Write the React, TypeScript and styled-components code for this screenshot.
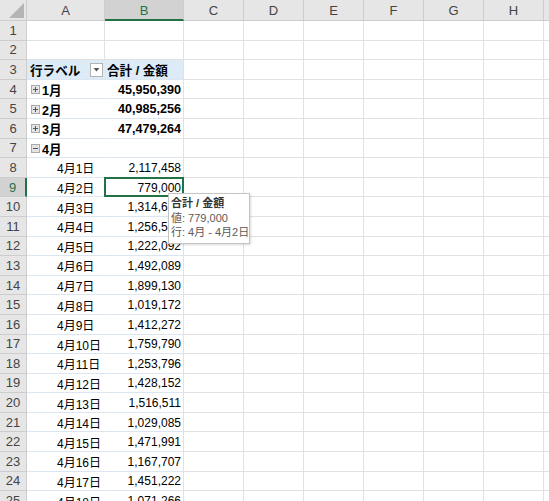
import React from "react";
import styled, {createGlobalStyle, css} from "styled-components";

const GlobalStyle = createGlobalStyle`
  html, body {
    margin: 0;
    padding: 0;
    background: #ffffff;
    overflow: hidden;
  }
  body {
    font-family: "Liberation Sans", "Noto Sans CJK JP", sans-serif;
  }
`

const GREEN = '#217346';
const GRID = '#e1e1e1';
const PIVOT_LINE = '#dbe6f2';
const HEAD_BG = '#e6e6e6';
const HEAD_SEL = '#d2d2d2';
const HEAD_LINE = '#cdcdcd';

const Sheet = styled.div`
  position: relative;
  display: grid;
  grid-template-columns: 27px 78px 79px repeat(7, 60px);
  grid-template-rows: 21px;
  grid-auto-rows: 19.6px;
  width: 549px;
  height: 501px;
  overflow: hidden;
  color: #000;
`

const Corner = styled.div`
  background: ${HEAD_BG};
  border-right: 1px solid ${HEAD_LINE};
  border-bottom: 1px solid ${HEAD_LINE};
  display: flex;
  align-items: flex-end;
  justify-content: flex-end;
  padding: 0 2px 2px 0;
  box-sizing: border-box;
`

const ColHeader = styled.div<{ $selected?: boolean }>`
  background: ${p => p.$selected ? HEAD_SEL : HEAD_BG};
  border-right: 1px solid ${HEAD_LINE};
  border-bottom: ${p => p.$selected ? `2px solid ${GREEN}` : `1px solid ${HEAD_LINE}`};
  box-sizing: border-box;
  display: flex;
  align-items: center;
  justify-content: center;
  font-size: 13px;
  color: ${p => p.$selected ? GREEN : '#444'};
  padding-top: ${p => p.$selected ? '1px' : '0'};
`

const RowHeader = styled.div<{ $selected?: boolean }>`
  background: ${p => p.$selected ? HEAD_SEL : HEAD_BG};
  border-right: ${p => p.$selected ? `2px solid ${GREEN}` : `1px solid ${HEAD_LINE}`};
  border-bottom: 1px solid ${HEAD_LINE};
  box-sizing: border-box;
  display: flex;
  align-items: center;
  justify-content: center;
  font-size: 13px;
  color: ${p => p.$selected ? GREEN : '#444'};
`

const Cell = styled.div<{ $pivot?: boolean; $head?: boolean; $inner?: boolean; $right?: boolean; $bold?: boolean; $indent?: number; $selected?: boolean }>`
  position: relative;
  box-sizing: border-box;
  border-right: 1px solid ${p => p.$inner ? 'transparent' : GRID};
  border-bottom: 1px solid ${p => p.$pivot ? PIVOT_LINE : GRID};
  background: ${p => p.$head ? '#ddebf7' : '#ffffff'};
  display: flex;
  align-items: center;
  justify-content: ${p => p.$right ? 'flex-end' : 'flex-start'};
  padding: 1px 2px 0 ${p => p.$indent ?? 3}px;
  font-size: ${p => p.$bold ? '12.6px' : '12px'};
  font-weight: ${p => p.$bold ? 700 : 400};
  white-space: nowrap;
  overflow: visible;
  ${p => p.$selected && css`
    &::after {
      content: "";
      position: absolute;
      left: -1px;
      top: -1px;
      right: -1px;
      bottom: -1px;
      border: 2px solid ${GREEN};
      pointer-events: none;
    }
  `}
`

const Label = styled.span`
  flex: 1;
`

const FilterButton = styled.span`
  width: 13px;
  height: 14px;
  box-sizing: border-box;
  border: 1px solid #b4b4b4;
  background: #ffffff;
  display: flex;
  align-items: center;
  justify-content: center;
  margin-right: -1px;
`

const Toggle = styled.svg`
  flex: none;
  margin-right: 2px;
`

const Tooltip = styled.div`
  position: absolute;
  left: 168px;
  top: 193px;
  width: 82px;
  box-sizing: border-box;
  padding: 2px 0 3px 2px;
  background: #ffffff;
  border: 1px solid #c4c4c4;
  box-shadow: 1px 1px 2px rgba(0, 0, 0, 0.15);
  font-size: 11px;
  line-height: 14.5px;
  color: #5a5a5a;
  white-space: nowrap;
`

const TipTitle = styled.div`
  font-weight: 700;
  color: #333;
`

const ExpandBox = ({open}: { open?: boolean }) => (
    <Toggle width="9" height="9" viewBox="0 0 9 9">
        <rect x="0.5" y="0.5" width="8" height="8" fill="#e4e4e4" stroke="#a9a9a9"/>
        <line x1="2" y1="4.5" x2="7" y2="4.5" stroke="#555" strokeWidth="1"/>
        {!open && <line x1="4.5" y1="2" x2="4.5" y2="7" stroke="#555" strokeWidth="1"/>}
    </Toggle>
);

const COLS = ['A', 'B', 'C', 'D', 'E', 'F', 'G', 'H', 'I'];

type Row =
    { kind: 'empty' }
    | { kind: 'head' }
    | { kind: 'group'; label: string; value: string; open?: boolean }
    | { kind: 'item'; label: string; value: string };

const rows: Row[] = [
    {kind: 'empty'},
    {kind: 'empty'},
    {kind: 'head'},
    {kind: 'group', label: '1月', value: '45,950,390'},
    {kind: 'group', label: '2月', value: '40,985,256'},
    {kind: 'group', label: '3月', value: '47,479,264'},
    {kind: 'group', label: '4月', value: '', open: true},
    {kind: 'item', label: '4月1日', value: '2,117,458'},
    {kind: 'item', label: '4月2日', value: '779,000'},
    {kind: 'item', label: '4月3日', value: '1,314,689'},
    {kind: 'item', label: '4月4日', value: '1,256,543'},
    {kind: 'item', label: '4月5日', value: '1,222,092'},
    {kind: 'item', label: '4月6日', value: '1,492,089'},
    {kind: 'item', label: '4月7日', value: '1,899,130'},
    {kind: 'item', label: '4月8日', value: '1,019,172'},
    {kind: 'item', label: '4月9日', value: '1,412,272'},
    {kind: 'item', label: '4月10日', value: '1,759,790'},
    {kind: 'item', label: '4月11日', value: '1,253,796'},
    {kind: 'item', label: '4月12日', value: '1,428,152'},
    {kind: 'item', label: '4月13日', value: '1,516,511'},
    {kind: 'item', label: '4月14日', value: '1,029,085'},
    {kind: 'item', label: '4月15日', value: '1,471,991'},
    {kind: 'item', label: '4月16日', value: '1,167,707'},
    {kind: 'item', label: '4月17日', value: '1,451,222'},
    {kind: 'item', label: '4月18日', value: '1,071,266'},
];

const SELECTED_ROW = 9;

export default function App() {
    return (
        <>
            <GlobalStyle/>
            <Sheet>
                <Corner>
                    <svg width="15" height="15" viewBox="0 0 15 15">
                        <polygon points="15,0 15,15 0,15" fill="#b5b5b5"/>
                    </svg>
                </Corner>
                {COLS.map(c => <ColHeader key={c} $selected={c === 'B'}>{c}</ColHeader>)}

                {rows.map((row, i) => {
                    const n = i + 1;
                    const sel = n === SELECTED_ROW;
                    const pivot = row.kind !== 'empty';
                    let a: React.ReactNode = null;
                    let b: React.ReactNode = null;
                    if (row.kind === 'head') {
                        a = <Cell $pivot $head $inner $bold>
                            <Label>行ラベル</Label>
                            <FilterButton>
                                <svg width="7" height="4" viewBox="0 0 7 4">
                                    <polygon points="0.5,0 6.5,0 3.5,3.5" fill="#555"/>
                                </svg>
                            </FilterButton>
                        </Cell>;
                        b = <Cell $pivot $head $bold $indent={2}>合計 / 金額</Cell>;
                    } else if (row.kind === 'group') {
                        a = <Cell $pivot $inner $bold $indent={4}><ExpandBox open={row.open}/>{row.label}</Cell>;
                        b = <Cell $pivot $bold $right>{row.value}</Cell>;
                    } else if (row.kind === 'item') {
                        a = <Cell $pivot $inner $indent={30}>{row.label}</Cell>;
                        b = <Cell $pivot $right $selected={sel}>{row.value}</Cell>;
                    } else {
                        a = <Cell/>;
                        b = <Cell/>;
                    }
                    return (
                        <React.Fragment key={n}>
                            <RowHeader $selected={sel}>{n}</RowHeader>
                            {React.cloneElement(a as React.ReactElement, {key: 'a'})}
                            {React.cloneElement(b as React.ReactElement, {key: 'b'})}
                            {COLS.slice(2).map(c => <Cell key={c} $pivot={false}/>)}
                            {pivot && null}
                        </React.Fragment>
                    );
                })}

                <Tooltip>
                    <TipTitle>合計 / 金額</TipTitle>
                    <div>値: 779,000</div>
                    <div>行: 4月 - 4月2日</div>
                </Tooltip>
            </Sheet>
        </>
    );
}
